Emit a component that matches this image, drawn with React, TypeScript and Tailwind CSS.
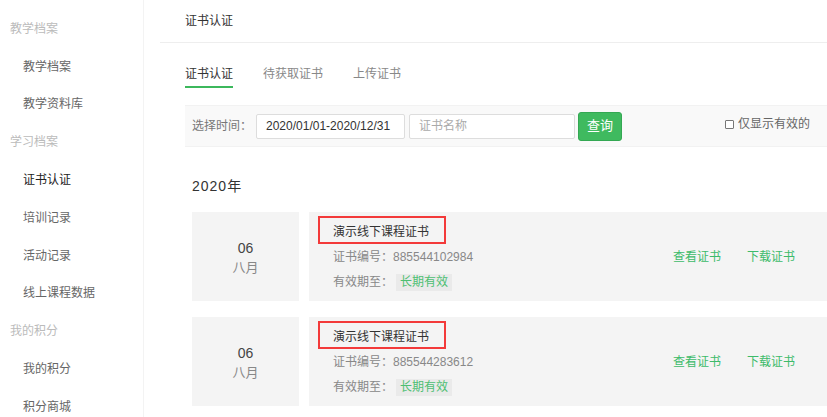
import React from 'react';

const font = { fontFamily: '"Liberation Sans", "Noto Sans CJK SC", sans-serif' };

type NavRow = { label: string; kind: 'head' | 'item' | 'active' };

const navRows: NavRow[] = [
  { label: '教学档案', kind: 'head' },
  { label: '教学档案', kind: 'item' },
  { label: '教学资料库', kind: 'item' },
  { label: '学习档案', kind: 'head' },
  { label: '证书认证', kind: 'active' },
  { label: '培训记录', kind: 'item' },
  { label: '活动记录', kind: 'item' },
  { label: '线上课程数据', kind: 'item' },
  { label: '我的积分', kind: 'head' },
  { label: '我的积分', kind: 'item' },
  { label: '积分商城', kind: 'item' },
];

const certs = [
  { day: '06', month: '八月', name: '演示线下课程证书', no: '885544102984' },
  { day: '06', month: '八月', name: '演示线下课程证书', no: '885544283612' },
];

function Sidebar() {
  return (
    <aside className="w-[144px] shrink-0 border-r border-[#f3f3f3] pt-[10px]">
      {navRows.map((row, i) => (
        <div
          key={i}
          className={
            row.kind === 'head'
              ? 'h-[37.8px] flex items-center pl-[10px] text-[12px] text-[#bbb]'
              : row.kind === 'active'
              ? 'h-[37.8px] flex items-center pl-[23px] text-[12px] text-[#222]'
              : 'h-[37.8px] flex items-center pl-[23px] text-[12px] text-[#666]'
          }
        >
          {row.label}
        </div>
      ))}
    </aside>
  );
}

function CertCard({ day, month, name, no }: (typeof certs)[number]) {
  return (
    <div className="flex h-[89px] gap-[10px]">
      <div className="w-[107px] shrink-0 bg-[#f4f4f4] flex flex-col items-center justify-center pt-[3px]">
        <div className="text-[14px] leading-[19px] text-[#444]">{day}</div>
        <div className="text-[13px] leading-[19px] text-[#888]">{month}</div>
      </div>
      <div className="flex-1 bg-[#f4f4f4] flex items-center pr-[32px]">
        <div className="flex flex-col self-start pt-[4px] pl-[9px]">
          <div className="w-[128px] h-[28px] border-2 border-[#f33a3a] flex items-center pl-[13px] pt-[3px] text-[12px] text-[#333]">
            {name}
          </div>
          <div className="pl-[15px] mt-[5px] text-[12px] leading-[17px] text-[#888]">证书编号：{no}</div>
          <div className="pl-[15px] mt-[7px] flex items-center text-[12px] text-[#888]">
            <span>有效期至：</span>
            <span className="ml-[3px] h-[17px] px-[4px] flex items-center bg-[#eaeaea] text-[#4dbf72]">长期有效</span>
          </div>
        </div>
        <div className="ml-auto flex gap-[26px] text-[12px] text-[#3dbb6a]">
          <span>查看证书</span>
          <span>下载证书</span>
        </div>
      </div>
    </div>
  );
}

export default function App() {
  return (
    <div className="flex w-[827px] h-[417px] overflow-hidden bg-white" style={font}>
      <Sidebar />
      <main className="flex-1 pl-[16px] overflow-hidden">
        <div className="h-[43px] border-b border-[#eeeeee] flex items-center pl-[25px] pb-[1px] text-[12px] text-[#333]">
          证书认证
        </div>
        <div className="pl-[25px]">
          <div className="flex gap-[30px] pt-[23px] text-[12px]">
            <div className="flex flex-col">
              <span className="leading-[17px] text-[#333]">证书认证</span>
              <span className="mt-[3px] h-[2px] bg-[#3cb85c]" />
            </div>
            <span className="leading-[17px] text-[#888]">待获取证书</span>
            <span className="leading-[17px] text-[#888]">上传证书</span>
          </div>
          <div className="mt-[17px] h-[42px] bg-[#f9f9f9] border-y border-[#f2f2f2] flex items-center pl-[7px] pr-[17px] text-[12px]">
            <span className="text-[#777]">选择时间：</span>
            <div className="ml-[4px] w-[149px] h-[25px] border border-[#dddddd] rounded-[2px] bg-white flex items-center pl-[9px] text-[#333]">
              2020/01/01-2020/12/31
            </div>
            <div className="ml-[4px] w-[166px] h-[25px] border border-[#dddddd] rounded-[2px] bg-white flex items-center pl-[9px] text-[#aaa]">
              证书名称
            </div>
            <button className="ml-[3px] w-[44px] h-[29px] rounded-[3px] bg-[#3fba5f] border border-[#34a853] text-white text-[13px]">
              查询
            </button>
            <label className="ml-auto self-start mt-[9px] flex items-center gap-[4px] text-[#666]">
              <span className="w-[9px] h-[9px] border border-[#777] rounded-[1px] bg-white" />
              仅显示有效的
            </label>
          </div>
          <div className="pl-[7px] mt-[29px] text-[14px] leading-[20px] tracking-[1px] text-[#333]">2020年</div>
          <div className="pl-[7px] mt-[16px] flex flex-col gap-[16px]">
            {certs.map((c, i) => (
              <CertCard key={i} {...c} />
            ))}
          </div>
        </div>
      </main>
    </div>
  );
}
